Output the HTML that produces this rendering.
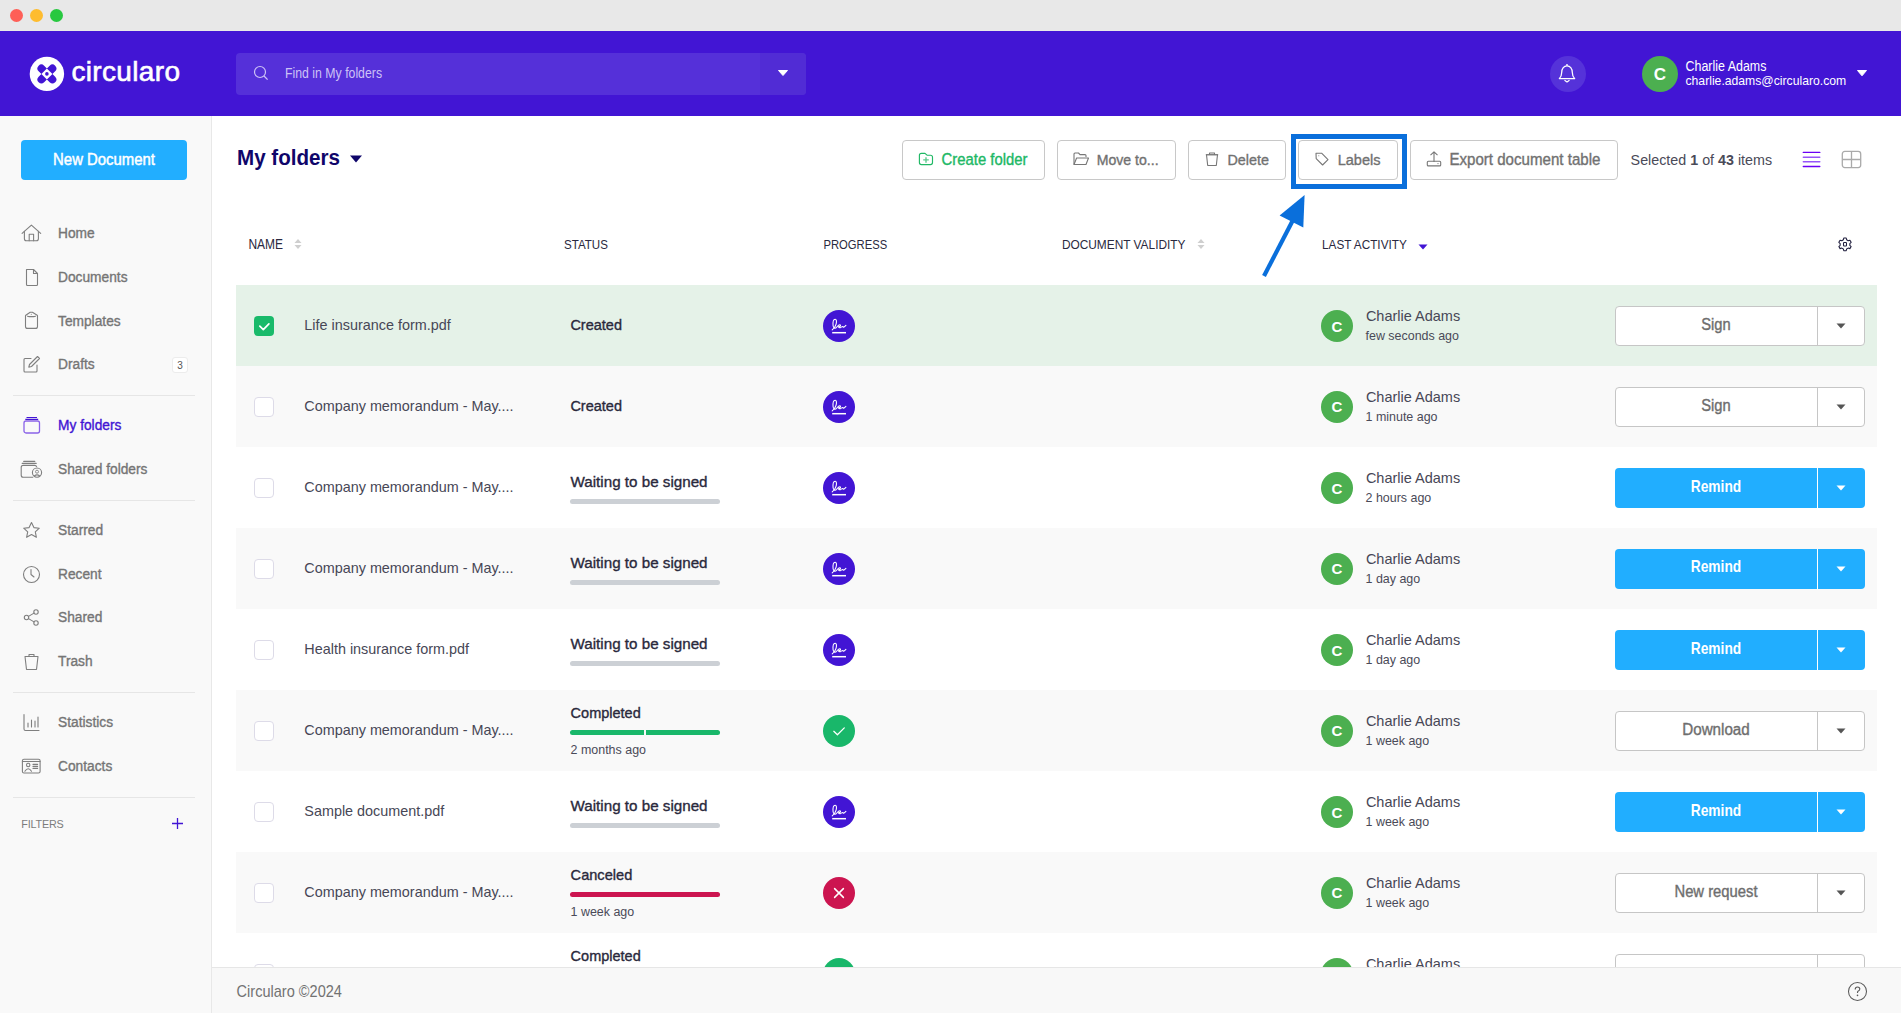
<!DOCTYPE html>
<html><head><meta charset="utf-8"><title>Circularo - My folders</title>
<style>
*{margin:0;padding:0;box-sizing:border-box}
html,body{width:1901px;height:1013px;overflow:hidden;background:#fff;font-family:"Liberation Sans",sans-serif}
body{position:relative}
.a{position:absolute}
.t{position:absolute;white-space:nowrap;line-height:1}
svg.a{overflow:visible}
</style></head>
<body>
<div class="a" style="left:0px;top:0px;width:1901px;height:31px;background:#e8e8e8"></div>
<div class="a" style="left:10px;top:9px;width:13px;height:13px;border-radius:50%;background:#fe5f57"></div>
<div class="a" style="left:30px;top:9px;width:13px;height:13px;border-radius:50%;background:#febc2e"></div>
<div class="a" style="left:50px;top:9px;width:13px;height:13px;border-radius:50%;background:#28c840"></div>
<div class="a" style="left:0px;top:31px;width:1901px;height:85px;background:#4215d4"></div>
<svg class="a" style="left:29px;top:56px" width="36" height="36" viewBox="0 0 36 36" fill="none"><circle cx="17.9" cy="17.9" r="17.2" fill="#fff"/>
<g transform="rotate(45 17.9 17.9)" stroke="#4215d4" stroke-width="7.8" stroke-linecap="round">
<path d="M10.1 17.9 H25.7"/><path d="M17.9 10.1 V25.7"/></g>
<rect x="14" y="14" width="7.8" height="7.8" fill="#fff" transform="rotate(45 17.9 17.9)"/>
<circle cx="17.9" cy="17.9" r="1.8" fill="#4215d4"/></svg>
<div class="t" style="left:71.4px;top:58.00px;font-size:28px;color:#fff;letter-spacing:0.35px;-webkit-text-stroke:0.6px #fff;">circularo</div>
<div class="a" style="left:236px;top:53px;width:570px;height:42px;border-radius:4px;background:#5530d9"></div>
<div class="a" style="left:760px;top:53px;width:46px;height:42px;border-radius:0 4px 4px 0;background:#512cd5"></div>
<svg class="a" style="left:253px;top:65px" width="18" height="18" viewBox="0 0 18 18" fill="none"><circle cx="7" cy="7" r="5.5" stroke="#cdc2f6" stroke-width="1.2"/><path d="M11 11 L14.6 14.6" stroke="#cdc2f6" stroke-width="1.3"/></svg>
<div class="t" style="left:285px;top:68.00px;font-size:12.3px;color:#cdc2f6;transform:scale(1.0,1.15);transform-origin:0 10px;">Find in My folders</div>
<svg class="a" style="left:777px;top:69px" width="12" height="8" viewBox="0 0 12 8" fill="none"><path d="M1.5 1.5 L10.5 1.5 L6 6.5 Z" fill="#fff" stroke="#fff" stroke-width="1" stroke-linejoin="round"/></svg>
<div class="a" style="left:1550px;top:56px;width:36px;height:36px;border-radius:50%;background:#5532d9"></div>
<svg class="a" style="left:1555px;top:61px" width="24" height="24" viewBox="0 0 24 24" fill="none"><path d="M4.3 17.6 C5.8 16.2 6.7 14.4 6.7 11.6 C6.7 7.6 9 4.8 12 4.8 C15 4.8 17.3 7.6 17.3 11.6 C17.3 14.4 18.2 16.2 19.7 17.6 Z" stroke="#fff" stroke-width="1.25" stroke-linejoin="round"/>
<circle cx="12" cy="3.9" r="0.9" fill="#fff"/><path d="M9.9 19.4 L12 21 L14.1 19.4" stroke="#fff" stroke-width="1.2" stroke-linecap="round" stroke-linejoin="round"/></svg>
<div class="a" style="left:1642px;top:56px;width:36px;height:36px;border-radius:50%;background:#4caf50"></div>
<div class="t" style="left:1642.0px;width:36px;text-align:center;top:66.00px;font-size:17px;color:#fff;font-weight:bold;">C</div>
<div class="t" style="left:1685.5px;top:61.00px;font-size:12.45px;color:#fff;transform:scale(1.0,1.11);transform-origin:0 10px;">Charlie Adams</div>
<div class="t" style="left:1685.5px;top:75.00px;font-size:12.2px;color:#fff;transform:scale(1.0,1.11);transform-origin:0 10px;">charlie.adams@circularo.com</div>
<svg class="a" style="left:1856px;top:69px" width="12" height="9" viewBox="0 0 12 9" fill="none"><path d="M1.5 1.5 L10.5 1.5 L6 6.8 Z" fill="#fff" stroke="#fff" stroke-width="1" stroke-linejoin="round"/></svg>
<div class="a" style="left:0px;top:116px;width:211px;height:897px;background:#f9f9f9"></div>
<div class="a" style="left:211px;top:116px;width:1px;height:897px;background:#e8e8e8"></div>
<div class="a" style="left:21px;top:140px;width:166px;height:40px;border-radius:4px;background:#22aeff"></div>
<div class="t" style="left:21.0px;width:166px;text-align:center;top:153.00px;font-size:14.9px;color:#fff;-webkit-text-stroke:0.45px #fff;transform:scaleY(1.07);transform-origin:50% 12px;">New Document</div>
<div class="t" style="left:58px;top:227.00px;font-size:13.75px;color:#757575;-webkit-text-stroke:0.35px #757575;transform:scale(1.0,1.05);transform-origin:0 11px;">Home</div>
<div class="t" style="left:58px;top:271.00px;font-size:13.75px;color:#757575;-webkit-text-stroke:0.35px #757575;transform:scale(1.0,1.05);transform-origin:0 11px;">Documents</div>
<div class="t" style="left:58px;top:315.00px;font-size:13.75px;color:#757575;-webkit-text-stroke:0.35px #757575;transform:scale(1.0,1.05);transform-origin:0 11px;">Templates</div>
<div class="t" style="left:58px;top:358.00px;font-size:13.75px;color:#757575;-webkit-text-stroke:0.35px #757575;transform:scale(1.0,1.05);transform-origin:0 11px;">Drafts</div>
<div class="t" style="left:58px;top:419.00px;font-size:13.75px;color:#4215d4;-webkit-text-stroke:0.35px #4215d4;transform:scale(1.0,1.05);transform-origin:0 11px;">My folders</div>
<div class="t" style="left:58px;top:463.00px;font-size:13.75px;color:#757575;-webkit-text-stroke:0.35px #757575;transform:scale(1.0,1.05);transform-origin:0 11px;">Shared folders</div>
<div class="t" style="left:58px;top:524.00px;font-size:13.75px;color:#757575;-webkit-text-stroke:0.35px #757575;transform:scale(1.0,1.05);transform-origin:0 11px;">Starred</div>
<div class="t" style="left:58px;top:568.00px;font-size:13.75px;color:#757575;-webkit-text-stroke:0.35px #757575;transform:scale(1.0,1.05);transform-origin:0 11px;">Recent</div>
<div class="t" style="left:58px;top:611.00px;font-size:13.75px;color:#757575;-webkit-text-stroke:0.35px #757575;transform:scale(1.0,1.05);transform-origin:0 11px;">Shared</div>
<div class="t" style="left:58px;top:655.00px;font-size:13.75px;color:#757575;-webkit-text-stroke:0.35px #757575;transform:scale(1.0,1.05);transform-origin:0 11px;">Trash</div>
<div class="t" style="left:58px;top:716.00px;font-size:13.75px;color:#757575;-webkit-text-stroke:0.35px #757575;transform:scale(1.0,1.05);transform-origin:0 11px;">Statistics</div>
<div class="t" style="left:58px;top:760.00px;font-size:13.75px;color:#757575;-webkit-text-stroke:0.35px #757575;transform:scale(1.0,1.05);transform-origin:0 11px;">Contacts</div>
<div class="a" style="left:13px;top:395px;width:182px;height:1px;background:#e6e6e6"></div>
<div class="a" style="left:13px;top:500px;width:182px;height:1px;background:#e6e6e6"></div>
<div class="a" style="left:13px;top:692px;width:182px;height:1px;background:#e6e6e6"></div>
<div class="a" style="left:13px;top:797px;width:182px;height:1px;background:#e6e6e6"></div>
<div class="a" style="left:172px;top:357px;width:16px;height:16px;border-radius:3px;background:#fff;border:1px solid #ececec"></div>
<div class="t" style="left:172.0px;width:16px;text-align:center;top:361.00px;font-size:10px;color:#555;">3</div>
<div class="t" style="left:21.3px;top:819.00px;font-size:10.8px;color:#7c7c7c;letter-spacing:-0.2px;transform:scale(1.0,1.05);transform-origin:0 9px;">FILTERS</div>
<svg class="a" style="left:171px;top:817px" width="13" height="13" viewBox="0 0 13 13" fill="none"><path d="M6.5 1 V12 M1 6.5 H12" stroke="#4215d4" stroke-width="1.3"/></svg>
<svg class="a" style="left:18px;top:220px" width="28" height="28" viewBox="0 0 28 28" fill="none"><path d="M4.1 13.3 L13.4 5.1 L22.7 13.3" stroke="#7f7f7f" stroke-width="1.1" stroke-linejoin="round" stroke-linecap="round"/><path d="M6.4 11.4 V18.7 Q6.4 20.7 8.4 20.7 H18.4 Q20.4 20.7 20.4 18.7 V11.4" stroke="#7f7f7f" stroke-width="1.1" stroke-linejoin="round" stroke-linecap="round"/><path d="M11.2 20.7 V14.3 H15.6 V20.7" stroke="#7f7f7f" stroke-width="1.1" stroke-linejoin="round" stroke-linecap="round"/></svg>
<svg class="a" style="left:23px;top:268px" width="20" height="20" viewBox="0 0 20 20" fill="none"><path d="M3.5 1.5 H10.5 L14.5 5.5 V16.5 Q14.5 17.5 13.5 17.5 H4.5 Q3.5 17.5 3.5 16.5 Z" stroke="#7f7f7f" stroke-width="1.1" stroke-linejoin="round" stroke-linecap="round"/><path d="M10.5 1.5 V5.5 H14.5" stroke="#7f7f7f" stroke-width="1.1" stroke-linejoin="round" stroke-linecap="round"/></svg>
<svg class="a" style="left:18px;top:308px" width="28" height="28" viewBox="0 0 28 28" fill="none"><path d="M7.5 7.6 V18.4 Q7.5 20.4 9.5 20.4 H17.5 Q19.5 20.4 19.5 18.4 V7.6" stroke="#7f7f7f" stroke-width="1.1" stroke-linejoin="round" stroke-linecap="round"/><path d="M7.8 7.3 L12.2 4.3 H14.4 L19.2 7.3" stroke="#7f7f7f" stroke-width="1.1" stroke-linejoin="round" stroke-linecap="round"/><path d="M9.6 8.2 Q10.2 8.6 11.2 8.6 H15.8 Q16.8 8.6 17.4 8.2" stroke="#7f7f7f" stroke-width="1.1" stroke-linejoin="round" stroke-linecap="round"/><circle cx="13.3" cy="6.3" r="0.55" fill="#7f7f7f"/></svg>
<svg class="a" style="left:22px;top:355px" width="20" height="20" viewBox="0 0 20 20" fill="none"><path d="M9 3.5 H3 Q2 3.5 2 4.5 V16 Q2 17 3 17 H14 Q15 17 15 16 V10" stroke="#7f7f7f" stroke-width="1.1" stroke-linejoin="round" stroke-linecap="round"/><path d="M15.5 1.5 L17.5 3.5 L9.5 11.5 L6.8 12.2 L7.5 9.5 Z" stroke="#7f7f7f" stroke-width="1.1" stroke-linejoin="round" stroke-linecap="round"/></svg>
<svg class="a" style="left:22px;top:521px" width="20" height="20" viewBox="0 0 20 20" fill="none"><path d="M9.5 1.5 L11.9 6.6 L17.3 7.2 L13.3 10.9 L14.4 16.3 L9.5 13.5 L4.6 16.3 L5.7 10.9 L1.7 7.2 L7.1 6.6 Z" stroke="#7f7f7f" stroke-width="1.1" stroke-linejoin="round" stroke-linecap="round"/></svg>
<svg class="a" style="left:22px;top:565px" width="20" height="20" viewBox="0 0 20 20" fill="none"><circle cx="9.5" cy="9.5" r="8" stroke="#7f7f7f" stroke-width="1.1" stroke-linejoin="round" stroke-linecap="round"/><path d="M9 4.5 V9.5 L12 12" stroke="#7f7f7f" stroke-width="1.1" stroke-linejoin="round" stroke-linecap="round"/></svg>
<svg class="a" style="left:22px;top:608px" width="20" height="20" viewBox="0 0 20 20" fill="none"><circle cx="14" cy="4" r="2.2" stroke="#7f7f7f" stroke-width="1.1" stroke-linejoin="round" stroke-linecap="round"/><circle cx="14" cy="15" r="2.2" stroke="#7f7f7f" stroke-width="1.1" stroke-linejoin="round" stroke-linecap="round"/><circle cx="4.5" cy="9.5" r="2.2" stroke="#7f7f7f" stroke-width="1.1" stroke-linejoin="round" stroke-linecap="round"/><path d="M6.5 8.4 L12 5.1 M6.5 10.6 L12 13.9" stroke="#7f7f7f" stroke-width="1.1" stroke-linejoin="round" stroke-linecap="round"/></svg>
<svg class="a" style="left:22px;top:652px" width="20" height="20" viewBox="0 0 20 20" fill="none"><path d="M3 4.5 H16 L14.5 17.5 H4.5 Z" stroke="#7f7f7f" stroke-width="1.1" stroke-linejoin="round" stroke-linecap="round"/><path d="M7 4.5 V2.5 H12 V4.5" stroke="#7f7f7f" stroke-width="1.1" stroke-linejoin="round" stroke-linecap="round"/></svg>
<svg class="a" style="left:22px;top:713px" width="20" height="20" viewBox="0 0 20 20" fill="none"><path d="M2 1.5 V16 Q2 17.5 3.5 17.5 H17" stroke="#7f7f7f" stroke-width="1.1" stroke-linejoin="round" stroke-linecap="round"/><path d="M6 14 V10 M9.5 14 V7 M13 14 V8 M16 14 V4" stroke="#7f7f7f" stroke-width="1.1" stroke-linejoin="round" stroke-linecap="round"/></svg>
<svg class="a" style="left:18px;top:752px" width="28" height="28" viewBox="0 0 28 28" fill="none"><rect x="4.4" y="7.2" width="17.7" height="13.8" rx="1.6" stroke="#7f7f7f" stroke-width="1.1" stroke-linejoin="round" stroke-linecap="round"/><path d="M4.4 9.5 H22.1" stroke="#7f7f7f" stroke-width="1.1" stroke-linejoin="round" stroke-linecap="round"/><circle cx="10.2" cy="13" r="1.7" stroke="#7f7f7f" stroke-width="1.1" stroke-linejoin="round" stroke-linecap="round"/><path d="M6.9 19.2 Q10.2 14.2 13.5 19.2" stroke="#7f7f7f" stroke-width="1.1" stroke-linejoin="round" stroke-linecap="round"/><path d="M15 12.4 H19.6 M15 14.4 H19.6 M15 16.4 H19.6" stroke="#7f7f7f" stroke-width="1.1" stroke-linejoin="round" stroke-linecap="round"/></svg>
<svg class="a" style="left:22px;top:415px" width="20" height="20" viewBox="0 0 20 20" fill="none"><rect x="2" y="6" width="15.5" height="12" rx="2" stroke="#8a63e8" stroke-width="1.3"/><path d="M4.5 2.5 H15 M3.3 4.4 H16.2" stroke="#4215d4" stroke-width="1.2" stroke-linejoin="round"/></svg>
<svg class="a" style="left:16px;top:456px" width="32" height="28" viewBox="0 0 32 28" fill="none"><path d="M7.7 5.4 H18.8 M6.2 7.4 H20.2" stroke="#7f7f7f" stroke-width="1.1" stroke-linecap="round" stroke-linejoin="round"/><path d="M20.6 10.6 Q20.2 9.4 18.7 9.4 H7.2 Q5.2 9.4 5.2 11.4 V19.3 Q5.2 21.3 7.2 21.3 H16.8" stroke="#7f7f7f" stroke-width="1.1" stroke-linecap="round" stroke-linejoin="round"/><circle cx="21" cy="16.6" r="4.6" stroke="#7f7f7f" stroke-width="1.1" stroke-linecap="round" stroke-linejoin="round"/><circle cx="21" cy="15.7" r="1.5" stroke="#8f8f8f" stroke-width="1"/><path d="M18.3 20 Q21 17.8 23.7 20" stroke="#7f7f7f" stroke-width="1.1" stroke-linecap="round" stroke-linejoin="round"/></svg>
<div class="t" style="left:237px;top:148.00px;font-size:20.6px;color:#0f066a;font-weight:bold;transform:scale(1.0,1.056);transform-origin:0 17px;">My folders</div>
<svg class="a" style="left:349px;top:154px" width="14" height="10" viewBox="0 0 14 10" fill="none"><path d="M1 1.5 L13 1.5 L7 8.5 Z" fill="#0f066a"/></svg>
<div class="a" style="left:902px;top:140px;width:143px;height:40px;border:1px solid #c8c8c8;border-radius:4px;background:#fff"></div>
<svg class="a" style="left:912px;top:146px" width="28" height="28" viewBox="0 0 28 28" fill="none"><path d="M9.4 7.3 H13 L15 9.2 H18.5 Q20.5 9.2 20.5 11.2 V16.6 Q20.5 18.6 18.5 18.6 H9.4 Q7.4 18.6 7.4 16.6 V9.3 Q7.4 7.3 9.4 7.3 Z" stroke="#20b865" stroke-width="1.15" stroke-linejoin="round"/><path d="M14 11.2 V16.7 M11.2 13.9 H16.8" stroke="#5fcb8f" stroke-width="1.4"/></svg>
<div class="t" style="left:941.6px;top:153.00px;font-size:14.85px;color:#20b865;-webkit-text-stroke:0.35px #20b865;transform:scale(1.0,1.05);transform-origin:0 12px;">Create folder</div>
<div class="a" style="left:1057px;top:140px;width:119px;height:40px;border:1px solid #c8c8c8;border-radius:4px;background:#fff"></div>
<svg class="a" style="left:1072px;top:151px" width="18" height="16" viewBox="0 0 18 16" fill="none"><path d="M2 13.5 V3 Q2 2 3 2 H6.5 L8 3.6 H13 Q14 3.6 14 4.6 V6" stroke="#777" stroke-width="1.1" stroke-linejoin="round"/><path d="M2 13.5 L4.6 7 H16.5 L14 13.5 Z" stroke="#777" stroke-width="1.1" stroke-linejoin="round"/></svg>
<div class="t" style="left:1096.7px;top:153.00px;font-size:14.1px;color:#717171;-webkit-text-stroke:0.35px #717171;transform:scale(1.0,1.05);transform-origin:0 12px;">Move to...</div>
<div class="a" style="left:1188px;top:140px;width:98px;height:40px;border:1px solid #c8c8c8;border-radius:4px;background:#fff"></div>
<svg class="a" style="left:1203px;top:151px" width="18" height="16" viewBox="0 0 18 16" fill="none"><path d="M3.5 3.8 H14.5 L13.3 14.5 H4.7 Z" stroke="#777" stroke-width="1.1" stroke-linejoin="round"/><path d="M6.5 3.8 V2 H11.5 V3.8 M2.8 3.8 H15.2" stroke="#777" stroke-width="1.1" stroke-linejoin="round"/></svg>
<div class="t" style="left:1227.5px;top:153.00px;font-size:14.35px;color:#717171;-webkit-text-stroke:0.35px #717171;transform:scale(1.0,1.05);transform-origin:0 12px;">Delete</div>
<div class="a" style="left:1291px;top:134px;width:116px;height:55px;border:5px solid #0a6fdb"></div>
<div class="a" style="left:1298px;top:140px;width:100px;height:40px;border:1px solid #c8c8c8;border-radius:4px;background:#fff"></div>
<svg class="a" style="left:1314px;top:151px" width="16" height="16" viewBox="0 0 16 16" fill="none"><path d="M2 2.2 H7.6 L14 8.6 L8.6 14 L2.2 7.6 Z" stroke="#777" stroke-width="1.1" stroke-linejoin="round"/><circle cx="4.8" cy="4.8" r="0.5" fill="#777"/></svg>
<div class="t" style="left:1337.7px;top:153.00px;font-size:14.55px;color:#717171;-webkit-text-stroke:0.35px #717171;transform:scale(1.0,1.05);transform-origin:0 12px;">Labels</div>
<div class="a" style="left:1410px;top:140px;width:208px;height:40px;border:1px solid #c8c8c8;border-radius:4px;background:#fff"></div>
<svg class="a" style="left:1425px;top:150px" width="18" height="18" viewBox="0 0 18 18" fill="none"><path d="M9 12 V2 M5.5 5.2 L9 1.8 L12.5 5.2" stroke="#777" stroke-width="1.1" stroke-linejoin="round"/><rect x="2.3" y="11.3" width="13.4" height="4.6" rx="1" stroke="#777" stroke-width="1.1" stroke-linejoin="round"/><circle cx="13" cy="13.6" r="0.6" fill="#777"/></svg>
<div class="t" style="left:1449.4px;top:152.00px;font-size:15.1px;color:#717171;-webkit-text-stroke:0.35px #717171;transform:scale(1.0,1.05);transform-origin:0 13px;">Export document table</div>
<div class="t" style="left:1630.6px;top:153.00px;font-size:14.3px;color:#4a4a58;transform:scale(1.0,1.08);transform-origin:0 12px;">Selected <b>1</b> of <b>43</b> items</div>
<svg class="a" style="left:1800px;top:149px" width="22" height="20" viewBox="0 0 22 20" fill="none"><path d="M3.3 3.4 H19.8 M3.3 17.5 H19.8" stroke="#6a00f4" stroke-width="1.4" stroke-linecap="round"/><path d="M3.3 8.2 H19.8 M3.3 12.8 H19.8" stroke="#9654f8" stroke-width="1.4" stroke-linecap="round"/></svg>
<svg class="a" style="left:1840px;top:149px" width="23" height="21" viewBox="0 0 23 21" fill="none"><rect x="2.3" y="2.4" width="18.4" height="16.2" rx="2.5" stroke="#aaa" stroke-width="1.3"/><path d="M11.5 2.4 V18.6 M2.3 10.5 H20.7" stroke="#aaa" stroke-width="1.3"/></svg>
<svg class="a" style="left:1250px;top:185px" width="70" height="100" viewBox="0 0 70 100" fill="none"><path d="M14 91 L43 35" stroke="#0a6fdb" stroke-width="4.2"/><path d="M54.6 9.9 L29.6 30.6 L53.3 42.4 Z" fill="#0a6fdb"/></svg>
<div class="t" style="left:248.4px;top:239.00px;font-size:11.98px;color:#2a2940;transform:scale(1.0,1.15);transform-origin:0 10px;">NAME</div>
<svg class="a" style="left:292px;top:237px" width="12" height="14" viewBox="0 0 12 14" fill="none"><path d="M2.5 6 L6 2 L9.5 6 Z M2.5 8 L6 12 L9.5 8 Z" fill="#cfcfcf"/></svg>
<div class="t" style="left:564px;top:240.00px;font-size:11.58px;color:#2a2940;transform:scale(1.0,1.15);transform-origin:0 9px;">STATUS</div>
<div class="t" style="left:823.4px;top:240.00px;font-size:11.25px;color:#2a2940;transform:scale(1.0,1.15);transform-origin:0 9px;">PROGRESS</div>
<div class="t" style="left:1061.9px;top:240.00px;font-size:11.89px;color:#2a2940;transform:scale(1.0,1.15);transform-origin:0 9px;">DOCUMENT VALIDITY</div>
<svg class="a" style="left:1195px;top:237px" width="12" height="14" viewBox="0 0 12 14" fill="none"><path d="M2.5 6 L6 2 L9.5 6 Z M2.5 8 L6 12 L9.5 8 Z" fill="#cfcfcf"/></svg>
<div class="t" style="left:1322px;top:239.00px;font-size:11.77px;color:#2a2940;transform:scale(1.0,1.15);transform-origin:0 10px;">LAST ACTIVITY</div>
<svg class="a" style="left:1417px;top:243px" width="12" height="8" viewBox="0 0 12 8" fill="none"><path d="M1.5 1.5 L10.5 1.5 L6 6.5 Z" fill="#4215d4"/></svg>
<svg class="a" style="left:1836px;top:235px" width="18" height="18" viewBox="0 0 18 18" fill="none"><g transform="translate(9 9.4) scale(0.88) translate(-9 -9.4)"><path d="M7.6 2.2 H10.4 L10.9 4.2 L12.6 5.2 L14.6 4.6 L16 7 L14.5 8.4 V10.4 L16 11.8 L14.6 14.2 L12.6 13.6 L10.9 14.6 L10.4 16.6 H7.6 L7.1 14.6 L5.4 13.6 L3.4 14.2 L2 11.8 L3.5 10.4 V8.4 L2 7 L3.4 4.6 L5.4 5.2 L7.1 4.2 Z" stroke="#1f1d3d" stroke-width="1.2" stroke-linejoin="round"/><rect x="7.3" y="7.3" width="3.4" height="4" rx="0.8" stroke="#1f1d3d" stroke-width="1.2"/></g></svg>
<div class="a" style="left:0;top:0;width:1901px;height:967px;overflow:hidden">
<div class="a" style="left:236px;top:285px;width:1641px;height:81px;background:#e5f2e8"></div>
<svg class="a" style="left:254px;top:316px" width="20" height="20" viewBox="0 0 20 20" fill="none"><rect x="0" y="0" width="20" height="20" rx="4" fill="#19ba6a"/><path d="M5.8 10.2 L9.3 13.7 L14.9 7.9" stroke="#fff" stroke-width="1.7" stroke-linecap="round" stroke-linejoin="round"/></svg>
<div class="t" style="left:304.3px;top:318.00px;font-size:14.4px;color:#474756;">Life insurance form.pdf</div>
<div class="t" style="left:570.4px;top:318.00px;font-size:14.5px;color:#2a293c;-webkit-text-stroke:0.35px #2a293c;transform:scale(1.0,1.05);transform-origin:0 12px;">Created</div>
<svg class="a" style="left:823px;top:310px" width="32" height="32" viewBox="0 0 32 32" fill="none"><circle cx="16" cy="16" r="16" fill="#4215d4"/>
<path d="M9.2 19.9 C10.8 18.6 12.3 17.4 13.1 14.2 C13.8 11.4 13.5 9.1 12.1 9.2 C10.4 9.4 9.8 12.8 10.1 15.8 C10.4 18.4 12.2 18.9 13.6 17.3 C14.6 16.1 15.6 14.5 16.9 14.7 C18 14.9 17.4 16.8 16.1 16.6 C15.1 16.4 15.6 18.1 17.3 17.7 C18.5 17.4 19.2 16.1 19.8 16.5 C20.3 16.9 20.5 17.6 21.3 16.9 L22.9 15.4" stroke="#fff" stroke-width="1.1" stroke-linecap="round" stroke-linejoin="round"/>
<path d="M9.2 22.7 H23" stroke="#fff" stroke-width="1.5"/></svg>
<div class="a" style="left:1321px;top:310px;width:32px;height:32px;border-radius:50%;background:#4caf50"></div>
<div class="t" style="left:1321.0px;width:32px;text-align:center;top:319.00px;font-size:15px;color:#fff;font-weight:bold;">C</div>
<div class="t" style="left:1365.9px;top:309.00px;font-size:14.5px;color:#474756;">Charlie Adams</div>
<div class="t" style="left:1365.5px;top:330.00px;font-size:12.46px;color:#4a4a58;">few seconds ago</div>
<div class="a" style="left:1615px;top:306px;width:250px;height:40px;border:1px solid #c6c6c6;border-radius:4px;background:#fff"></div>
<div class="a" style="left:1817px;top:306px;width:1px;height:40px;background:#c6c6c6"></div>
<div class="t" style="left:1616.0px;width:200px;text-align:center;top:318.00px;font-size:14.7px;color:#6e6e6e;-webkit-text-stroke:0.35px #6e6e6e;transform:scaleY(1.08);transform-origin:50% 12px;">Sign</div>
<svg class="a" style="left:1835px;top:322px" width="12" height="8" viewBox="0 0 12 8" fill="none"><path d="M1.5 1.5 L10.5 1.5 L6 6.5 Z" fill="#555"/></svg>
<div class="a" style="left:236px;top:366px;width:1641px;height:81px;background:#f9f9f9"></div>
<div class="a" style="left:254px;top:397px;width:20px;height:20px;border:1px solid #dddbe8;border-radius:4px;background:#fff"></div>
<div class="t" style="left:304.3px;top:399.00px;font-size:14.4px;color:#474756;">Company memorandum - May....</div>
<div class="t" style="left:570.4px;top:399.00px;font-size:14.5px;color:#2a293c;-webkit-text-stroke:0.35px #2a293c;transform:scale(1.0,1.05);transform-origin:0 12px;">Created</div>
<svg class="a" style="left:823px;top:391px" width="32" height="32" viewBox="0 0 32 32" fill="none"><circle cx="16" cy="16" r="16" fill="#4215d4"/>
<path d="M9.2 19.9 C10.8 18.6 12.3 17.4 13.1 14.2 C13.8 11.4 13.5 9.1 12.1 9.2 C10.4 9.4 9.8 12.8 10.1 15.8 C10.4 18.4 12.2 18.9 13.6 17.3 C14.6 16.1 15.6 14.5 16.9 14.7 C18 14.9 17.4 16.8 16.1 16.6 C15.1 16.4 15.6 18.1 17.3 17.7 C18.5 17.4 19.2 16.1 19.8 16.5 C20.3 16.9 20.5 17.6 21.3 16.9 L22.9 15.4" stroke="#fff" stroke-width="1.1" stroke-linecap="round" stroke-linejoin="round"/>
<path d="M9.2 22.7 H23" stroke="#fff" stroke-width="1.5"/></svg>
<div class="a" style="left:1321px;top:391px;width:32px;height:32px;border-radius:50%;background:#4caf50"></div>
<div class="t" style="left:1321.0px;width:32px;text-align:center;top:399.00px;font-size:15px;color:#fff;font-weight:bold;">C</div>
<div class="t" style="left:1365.9px;top:390.00px;font-size:14.5px;color:#474756;">Charlie Adams</div>
<div class="t" style="left:1365.5px;top:411.00px;font-size:12.46px;color:#4a4a58;">1 minute ago</div>
<div class="a" style="left:1615px;top:387px;width:250px;height:40px;border:1px solid #c6c6c6;border-radius:4px;background:#fff"></div>
<div class="a" style="left:1817px;top:387px;width:1px;height:40px;background:#c6c6c6"></div>
<div class="t" style="left:1616.0px;width:200px;text-align:center;top:399.00px;font-size:14.7px;color:#6e6e6e;-webkit-text-stroke:0.35px #6e6e6e;transform:scaleY(1.08);transform-origin:50% 12px;">Sign</div>
<svg class="a" style="left:1835px;top:403px" width="12" height="8" viewBox="0 0 12 8" fill="none"><path d="M1.5 1.5 L10.5 1.5 L6 6.5 Z" fill="#555"/></svg>
<div class="a" style="left:236px;top:447px;width:1641px;height:81px;background:#ffffff"></div>
<div class="a" style="left:254px;top:478px;width:20px;height:20px;border:1px solid #dddbe8;border-radius:4px;background:#fff"></div>
<div class="t" style="left:304.3px;top:480.00px;font-size:14.4px;color:#474756;">Company memorandum - May....</div>
<div class="t" style="left:570.5px;top:474.00px;font-size:15.2px;color:#2a293c;-webkit-text-stroke:0.35px #2a293c;transform:scale(1.0,1.02);transform-origin:0 13px;">Waiting to be signed</div>
<div class="a" style="left:570px;top:499px;width:150px;height:5px;border-radius:3px;background:#ccd0d5"></div>
<svg class="a" style="left:823px;top:472px" width="32" height="32" viewBox="0 0 32 32" fill="none"><circle cx="16" cy="16" r="16" fill="#4215d4"/>
<path d="M9.2 19.9 C10.8 18.6 12.3 17.4 13.1 14.2 C13.8 11.4 13.5 9.1 12.1 9.2 C10.4 9.4 9.8 12.8 10.1 15.8 C10.4 18.4 12.2 18.9 13.6 17.3 C14.6 16.1 15.6 14.5 16.9 14.7 C18 14.9 17.4 16.8 16.1 16.6 C15.1 16.4 15.6 18.1 17.3 17.7 C18.5 17.4 19.2 16.1 19.8 16.5 C20.3 16.9 20.5 17.6 21.3 16.9 L22.9 15.4" stroke="#fff" stroke-width="1.1" stroke-linecap="round" stroke-linejoin="round"/>
<path d="M9.2 22.7 H23" stroke="#fff" stroke-width="1.5"/></svg>
<div class="a" style="left:1321px;top:472px;width:32px;height:32px;border-radius:50%;background:#4caf50"></div>
<div class="t" style="left:1321.0px;width:32px;text-align:center;top:481.00px;font-size:15px;color:#fff;font-weight:bold;">C</div>
<div class="t" style="left:1365.9px;top:471.00px;font-size:14.5px;color:#474756;">Charlie Adams</div>
<div class="t" style="left:1365.5px;top:492.00px;font-size:12.46px;color:#4a4a58;">2 hours ago</div>
<div class="a" style="left:1615px;top:468px;width:250px;height:40px;border-radius:4px;background:#21aeff"></div>
<div class="a" style="left:1817px;top:468px;width:1px;height:40px;background:#fff"></div>
<div class="t" style="left:1616.0px;width:200px;text-align:center;top:481.00px;font-size:13.77px;color:#fff;font-weight:bold;transform:scaleY(1.15);transform-origin:50% 11px;">Remind</div>
<svg class="a" style="left:1835px;top:484px" width="12" height="8" viewBox="0 0 12 8" fill="none"><path d="M1.5 1.5 L10.5 1.5 L6 6.5 Z" fill="#fff"/></svg>
<div class="a" style="left:236px;top:528px;width:1641px;height:81px;background:#f9f9f9"></div>
<div class="a" style="left:254px;top:559px;width:20px;height:20px;border:1px solid #dddbe8;border-radius:4px;background:#fff"></div>
<div class="t" style="left:304.3px;top:561.00px;font-size:14.4px;color:#474756;">Company memorandum - May....</div>
<div class="t" style="left:570.5px;top:555.00px;font-size:15.2px;color:#2a293c;-webkit-text-stroke:0.35px #2a293c;transform:scale(1.0,1.02);transform-origin:0 13px;">Waiting to be signed</div>
<div class="a" style="left:570px;top:580px;width:150px;height:5px;border-radius:3px;background:#ccd0d5"></div>
<svg class="a" style="left:823px;top:553px" width="32" height="32" viewBox="0 0 32 32" fill="none"><circle cx="16" cy="16" r="16" fill="#4215d4"/>
<path d="M9.2 19.9 C10.8 18.6 12.3 17.4 13.1 14.2 C13.8 11.4 13.5 9.1 12.1 9.2 C10.4 9.4 9.8 12.8 10.1 15.8 C10.4 18.4 12.2 18.9 13.6 17.3 C14.6 16.1 15.6 14.5 16.9 14.7 C18 14.9 17.4 16.8 16.1 16.6 C15.1 16.4 15.6 18.1 17.3 17.7 C18.5 17.4 19.2 16.1 19.8 16.5 C20.3 16.9 20.5 17.6 21.3 16.9 L22.9 15.4" stroke="#fff" stroke-width="1.1" stroke-linecap="round" stroke-linejoin="round"/>
<path d="M9.2 22.7 H23" stroke="#fff" stroke-width="1.5"/></svg>
<div class="a" style="left:1321px;top:553px;width:32px;height:32px;border-radius:50%;background:#4caf50"></div>
<div class="t" style="left:1321.0px;width:32px;text-align:center;top:561.00px;font-size:15px;color:#fff;font-weight:bold;">C</div>
<div class="t" style="left:1365.9px;top:552.00px;font-size:14.5px;color:#474756;">Charlie Adams</div>
<div class="t" style="left:1365.5px;top:573.00px;font-size:12.46px;color:#4a4a58;">1 day ago</div>
<div class="a" style="left:1615px;top:549px;width:250px;height:40px;border-radius:4px;background:#21aeff"></div>
<div class="a" style="left:1817px;top:549px;width:1px;height:40px;background:#fff"></div>
<div class="t" style="left:1616.0px;width:200px;text-align:center;top:561.00px;font-size:13.77px;color:#fff;font-weight:bold;transform:scaleY(1.15);transform-origin:50% 11px;">Remind</div>
<svg class="a" style="left:1835px;top:565px" width="12" height="8" viewBox="0 0 12 8" fill="none"><path d="M1.5 1.5 L10.5 1.5 L6 6.5 Z" fill="#fff"/></svg>
<div class="a" style="left:236px;top:609px;width:1641px;height:81px;background:#ffffff"></div>
<div class="a" style="left:254px;top:640px;width:20px;height:20px;border:1px solid #dddbe8;border-radius:4px;background:#fff"></div>
<div class="t" style="left:304.3px;top:642.00px;font-size:14.4px;color:#474756;">Health insurance form.pdf</div>
<div class="t" style="left:570.5px;top:636.00px;font-size:15.2px;color:#2a293c;-webkit-text-stroke:0.35px #2a293c;transform:scale(1.0,1.02);transform-origin:0 13px;">Waiting to be signed</div>
<div class="a" style="left:570px;top:661px;width:150px;height:5px;border-radius:3px;background:#ccd0d5"></div>
<svg class="a" style="left:823px;top:634px" width="32" height="32" viewBox="0 0 32 32" fill="none"><circle cx="16" cy="16" r="16" fill="#4215d4"/>
<path d="M9.2 19.9 C10.8 18.6 12.3 17.4 13.1 14.2 C13.8 11.4 13.5 9.1 12.1 9.2 C10.4 9.4 9.8 12.8 10.1 15.8 C10.4 18.4 12.2 18.9 13.6 17.3 C14.6 16.1 15.6 14.5 16.9 14.7 C18 14.9 17.4 16.8 16.1 16.6 C15.1 16.4 15.6 18.1 17.3 17.7 C18.5 17.4 19.2 16.1 19.8 16.5 C20.3 16.9 20.5 17.6 21.3 16.9 L22.9 15.4" stroke="#fff" stroke-width="1.1" stroke-linecap="round" stroke-linejoin="round"/>
<path d="M9.2 22.7 H23" stroke="#fff" stroke-width="1.5"/></svg>
<div class="a" style="left:1321px;top:634px;width:32px;height:32px;border-radius:50%;background:#4caf50"></div>
<div class="t" style="left:1321.0px;width:32px;text-align:center;top:643.00px;font-size:15px;color:#fff;font-weight:bold;">C</div>
<div class="t" style="left:1365.9px;top:633.00px;font-size:14.5px;color:#474756;">Charlie Adams</div>
<div class="t" style="left:1365.5px;top:654.00px;font-size:12.46px;color:#4a4a58;">1 day ago</div>
<div class="a" style="left:1615px;top:630px;width:250px;height:40px;border-radius:4px;background:#21aeff"></div>
<div class="a" style="left:1817px;top:630px;width:1px;height:40px;background:#fff"></div>
<div class="t" style="left:1616.0px;width:200px;text-align:center;top:643.00px;font-size:13.77px;color:#fff;font-weight:bold;transform:scaleY(1.15);transform-origin:50% 11px;">Remind</div>
<svg class="a" style="left:1835px;top:646px" width="12" height="8" viewBox="0 0 12 8" fill="none"><path d="M1.5 1.5 L10.5 1.5 L6 6.5 Z" fill="#fff"/></svg>
<div class="a" style="left:236px;top:690px;width:1641px;height:81px;background:#f9f9f9"></div>
<div class="a" style="left:254px;top:721px;width:20px;height:20px;border:1px solid #dddbe8;border-radius:4px;background:#fff"></div>
<div class="t" style="left:304.3px;top:723.00px;font-size:14.4px;color:#474756;">Company memorandum - May....</div>
<div class="t" style="left:570.6px;top:706.00px;font-size:14.5px;color:#2a293c;-webkit-text-stroke:0.35px #2a293c;transform:scale(1.0,1.05);transform-origin:0 12px;">Completed</div>
<div class="a" style="left:570px;top:730px;width:74px;height:5px;border-radius:3px 0 0 3px;background:#19b76a"></div>
<div class="a" style="left:646px;top:730px;width:74px;height:5px;border-radius:0 3px 3px 0;background:#19b76a"></div>
<div class="t" style="left:570.6px;top:744.00px;font-size:12.44px;color:#4a4a58;">2 months ago</div>
<svg class="a" style="left:823px;top:715px" width="32" height="32" viewBox="0 0 32 32" fill="none"><circle cx="16" cy="16" r="16" fill="#19b76a"/><path d="M10.8 16.3 L14.4 19.8 L21.3 12.9" stroke="#fff" stroke-width="1.25" stroke-linecap="round" stroke-linejoin="round"/></svg>
<div class="a" style="left:1321px;top:715px;width:32px;height:32px;border-radius:50%;background:#4caf50"></div>
<div class="t" style="left:1321.0px;width:32px;text-align:center;top:723.00px;font-size:15px;color:#fff;font-weight:bold;">C</div>
<div class="t" style="left:1365.9px;top:714.00px;font-size:14.5px;color:#474756;">Charlie Adams</div>
<div class="t" style="left:1365.5px;top:735.00px;font-size:12.46px;color:#4a4a58;">1 week ago</div>
<div class="a" style="left:1615px;top:711px;width:250px;height:40px;border:1px solid #c6c6c6;border-radius:4px;background:#fff"></div>
<div class="a" style="left:1817px;top:711px;width:1px;height:40px;background:#c6c6c6"></div>
<div class="t" style="left:1616.0px;width:200px;text-align:center;top:722.00px;font-size:15.2px;color:#6e6e6e;-webkit-text-stroke:0.35px #6e6e6e;transform:scaleY(1.08);transform-origin:50% 13px;">Download</div>
<svg class="a" style="left:1835px;top:727px" width="12" height="8" viewBox="0 0 12 8" fill="none"><path d="M1.5 1.5 L10.5 1.5 L6 6.5 Z" fill="#555"/></svg>
<div class="a" style="left:236px;top:771px;width:1641px;height:81px;background:#ffffff"></div>
<div class="a" style="left:254px;top:802px;width:20px;height:20px;border:1px solid #dddbe8;border-radius:4px;background:#fff"></div>
<div class="t" style="left:304.3px;top:804.00px;font-size:14.4px;color:#474756;">Sample document.pdf</div>
<div class="t" style="left:570.5px;top:798.00px;font-size:15.2px;color:#2a293c;-webkit-text-stroke:0.35px #2a293c;transform:scale(1.0,1.02);transform-origin:0 13px;">Waiting to be signed</div>
<div class="a" style="left:570px;top:823px;width:150px;height:5px;border-radius:3px;background:#ccd0d5"></div>
<svg class="a" style="left:823px;top:796px" width="32" height="32" viewBox="0 0 32 32" fill="none"><circle cx="16" cy="16" r="16" fill="#4215d4"/>
<path d="M9.2 19.9 C10.8 18.6 12.3 17.4 13.1 14.2 C13.8 11.4 13.5 9.1 12.1 9.2 C10.4 9.4 9.8 12.8 10.1 15.8 C10.4 18.4 12.2 18.9 13.6 17.3 C14.6 16.1 15.6 14.5 16.9 14.7 C18 14.9 17.4 16.8 16.1 16.6 C15.1 16.4 15.6 18.1 17.3 17.7 C18.5 17.4 19.2 16.1 19.8 16.5 C20.3 16.9 20.5 17.6 21.3 16.9 L22.9 15.4" stroke="#fff" stroke-width="1.1" stroke-linecap="round" stroke-linejoin="round"/>
<path d="M9.2 22.7 H23" stroke="#fff" stroke-width="1.5"/></svg>
<div class="a" style="left:1321px;top:796px;width:32px;height:32px;border-radius:50%;background:#4caf50"></div>
<div class="t" style="left:1321.0px;width:32px;text-align:center;top:805.00px;font-size:15px;color:#fff;font-weight:bold;">C</div>
<div class="t" style="left:1365.9px;top:795.00px;font-size:14.5px;color:#474756;">Charlie Adams</div>
<div class="t" style="left:1365.5px;top:816.00px;font-size:12.46px;color:#4a4a58;">1 week ago</div>
<div class="a" style="left:1615px;top:792px;width:250px;height:40px;border-radius:4px;background:#21aeff"></div>
<div class="a" style="left:1817px;top:792px;width:1px;height:40px;background:#fff"></div>
<div class="t" style="left:1616.0px;width:200px;text-align:center;top:805.00px;font-size:13.77px;color:#fff;font-weight:bold;transform:scaleY(1.15);transform-origin:50% 11px;">Remind</div>
<svg class="a" style="left:1835px;top:808px" width="12" height="8" viewBox="0 0 12 8" fill="none"><path d="M1.5 1.5 L10.5 1.5 L6 6.5 Z" fill="#fff"/></svg>
<div class="a" style="left:236px;top:852px;width:1641px;height:81px;background:#f9f9f9"></div>
<div class="a" style="left:254px;top:883px;width:20px;height:20px;border:1px solid #dddbe8;border-radius:4px;background:#fff"></div>
<div class="t" style="left:304.3px;top:885.00px;font-size:14.4px;color:#474756;">Company memorandum - May....</div>
<div class="t" style="left:570.6px;top:868.00px;font-size:14.6px;color:#2a293c;-webkit-text-stroke:0.35px #2a293c;transform:scale(1.0,1.05);transform-origin:0 12px;">Canceled</div>
<div class="a" style="left:570px;top:892px;width:150px;height:5px;border-radius:3px;background:#cc1550"></div>
<div class="t" style="left:570.6px;top:906.00px;font-size:12.44px;color:#4a4a58;">1 week ago</div>
<svg class="a" style="left:823px;top:877px" width="32" height="32" viewBox="0 0 32 32" fill="none"><circle cx="16" cy="16" r="16" fill="#cc1550"/><path d="M11.6 11.6 L20.4 20.4 M20.4 11.6 L11.6 20.4" stroke="#fff" stroke-width="1.5" stroke-linecap="round"/></svg>
<div class="a" style="left:1321px;top:877px;width:32px;height:32px;border-radius:50%;background:#4caf50"></div>
<div class="t" style="left:1321.0px;width:32px;text-align:center;top:885.00px;font-size:15px;color:#fff;font-weight:bold;">C</div>
<div class="t" style="left:1365.9px;top:876.00px;font-size:14.5px;color:#474756;">Charlie Adams</div>
<div class="t" style="left:1365.5px;top:897.00px;font-size:12.46px;color:#4a4a58;">1 week ago</div>
<div class="a" style="left:1615px;top:873px;width:250px;height:40px;border:1px solid #c6c6c6;border-radius:4px;background:#fff"></div>
<div class="a" style="left:1817px;top:873px;width:1px;height:40px;background:#c6c6c6"></div>
<div class="t" style="left:1616.0px;width:200px;text-align:center;top:885.00px;font-size:14.8px;color:#6e6e6e;-webkit-text-stroke:0.35px #6e6e6e;transform:scaleY(1.08);transform-origin:50% 12px;">New request</div>
<svg class="a" style="left:1835px;top:889px" width="12" height="8" viewBox="0 0 12 8" fill="none"><path d="M1.5 1.5 L10.5 1.5 L6 6.5 Z" fill="#555"/></svg>
<div class="a" style="left:236px;top:933px;width:1641px;height:81px;background:#ffffff"></div>
<div class="a" style="left:254px;top:964px;width:20px;height:20px;border:1px solid #dddbe8;border-radius:4px;background:#fff"></div>
<div class="t" style="left:304.3px;top:966.00px;font-size:14.4px;color:#474756;">Company memorandum - May....</div>
<div class="t" style="left:570.6px;top:949.00px;font-size:14.5px;color:#2a293c;-webkit-text-stroke:0.35px #2a293c;transform:scale(1.0,1.05);transform-origin:0 12px;">Completed</div>
<div class="a" style="left:570px;top:973px;width:74px;height:5px;border-radius:3px 0 0 3px;background:#19b76a"></div>
<div class="a" style="left:646px;top:973px;width:74px;height:5px;border-radius:0 3px 3px 0;background:#19b76a"></div>
<div class="t" style="left:570.6px;top:987.00px;font-size:12.44px;color:#4a4a58;">2 months ago</div>
<svg class="a" style="left:823px;top:958px" width="32" height="32" viewBox="0 0 32 32" fill="none"><circle cx="16" cy="16" r="16" fill="#19b76a"/><path d="M10.8 16.3 L14.4 19.8 L21.3 12.9" stroke="#fff" stroke-width="1.25" stroke-linecap="round" stroke-linejoin="round"/></svg>
<div class="a" style="left:1321px;top:958px;width:32px;height:32px;border-radius:50%;background:#4caf50"></div>
<div class="t" style="left:1321.0px;width:32px;text-align:center;top:967.00px;font-size:15px;color:#fff;font-weight:bold;">C</div>
<div class="t" style="left:1365.9px;top:957.00px;font-size:14.5px;color:#474756;">Charlie Adams</div>
<div class="t" style="left:1365.5px;top:978.00px;font-size:12.46px;color:#4a4a58;">1 week ago</div>
<div class="a" style="left:1615px;top:954px;width:250px;height:40px;border:1px solid #c6c6c6;border-radius:4px;background:#fff"></div>
<div class="a" style="left:1817px;top:954px;width:1px;height:40px;background:#c6c6c6"></div>
<svg class="a" style="left:1835px;top:970px" width="12" height="8" viewBox="0 0 12 8" fill="none"><path d="M1.5 1.5 L10.5 1.5 L6 6.5 Z" fill="#555"/></svg>
</div>
<div class="a" style="left:212px;top:967px;width:1689px;height:46px;background:#f8f8f8;border-top:1px solid #e6e6e6"></div>
<div class="t" style="left:236.6px;top:985.00px;font-size:14.55px;color:#727272;transform:scale(1.0,1.1);transform-origin:0 12px;">Circularo ©2024</div>
<svg class="a" style="left:1847px;top:981px" width="21" height="21" viewBox="0 0 21 21" fill="none"><circle cx="10.5" cy="10.5" r="9" stroke="#5a5a5a" stroke-width="1.05"/><path d="M8.2 8.4 Q8.2 6 10.5 6 Q12.8 6 12.8 8.1 Q12.8 9.5 11 10.3 Q10.5 10.6 10.5 12" stroke="#5a5a5a" stroke-width="1.15" fill="none"/><circle cx="10.5" cy="14.4" r="0.8" fill="#5a5a5a"/></svg>
</body></html>
